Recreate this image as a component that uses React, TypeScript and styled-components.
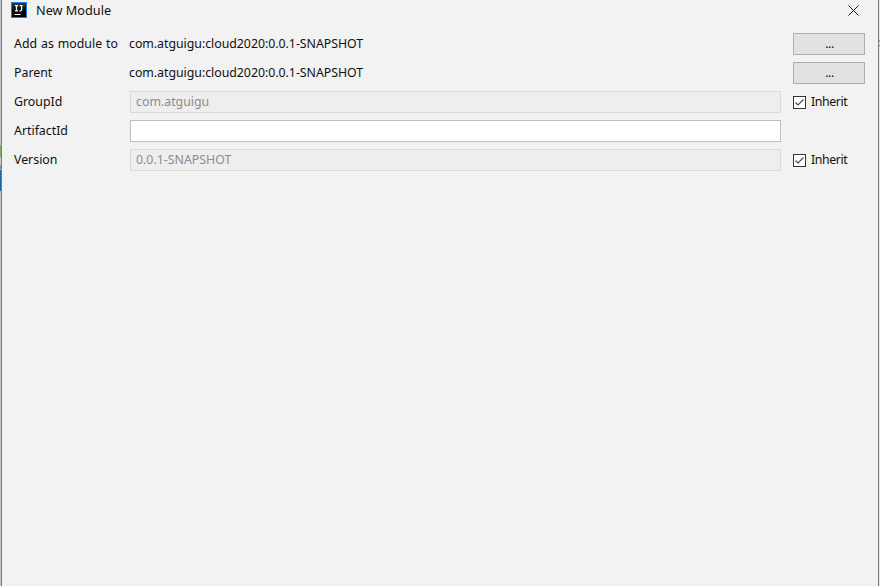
import React from "react";
import styled, { createGlobalStyle } from "styled-components";

const Global = createGlobalStyle`
  html, body { margin: 0; padding: 0; width: 880px; height: 586px; overflow: hidden; background: #f2f2f2; }
  body { font-family: "Noto Sans", "Liberation Sans", sans-serif; font-size: 12.35px; color: #111111; }
`;

const Screen = styled.div`
  width: 880px;
  height: 586px;
  display: flex;
  background: #f2f2f2;
`;

const EdgeStrip = styled.div`
  width: 1px;
  flex: none;
  display: flex;
  flex-direction: column;
  background: #c8c8c8;
`;

const EdgeSegment = styled.div<{ $h: number; $c: string }>`
  height: ${(p) => p.$h}px;
  flex: none;
  background: ${(p) => p.$c};
`;

const Frame = styled.div`
  flex: 1;
  min-width: 0;
  border-left: 1px solid #7a7a7a;
  border-right: 1px solid #7a7a7a;
  padding: 0 13px 0 12px;
  display: flex;
  flex-direction: column;
`;

const TitleBar = styled.div`
  height: 20px;
  display: flex;
  align-items: center;
  gap: 9px;
  margin-left: -3px;
  margin-right: -13px;
  padding-right: 19px;
`;

const Title = styled.span`
  flex: 1;
  font-size: 12.7px;
`;

const Form = styled.div`
  margin-top: 13px;
  display: grid;
  grid-template-columns: 116px 651px 72px;
  grid-auto-rows: 22px;
  row-gap: 7px;
  align-items: center;
`;

const Label = styled.div`
  white-space: nowrap;
  margin-top: -1px;
  word-spacing: 0.7px;
`;

const Value = styled.div`
  white-space: nowrap;
  margin-left: -1px;
  margin-top: -1px;
  letter-spacing: -0.03px;
`;

const Field = styled.div<{ $disabled?: boolean }>`
  height: 22px;
  box-sizing: border-box;
  border: 1px solid ${(p) => (p.$disabled ? "#d9d9d9" : "#bdbdbd")};
  background: ${(p) => (p.$disabled ? "#eeeeee" : "#ffffff")};
  color: #8c8c8c;
  padding-left: 5px;
  line-height: 19px;
`;

const SideCell = styled.div`
  margin-left: 12px;
  width: 72px;
  display: flex;
  align-items: center;
`;

const Browse = styled.div`
  width: 72px;
  height: 22px;
  box-sizing: border-box;
  border: 1px solid #adadad;
  background: #e1e1e1;
  text-align: center;
  line-height: 20px;
  padding-left: 1px;
  letter-spacing: -0.4px;
`;

const CheckBox = styled.span`
  width: 13px;
  height: 13px;
  flex: none;
  box-sizing: border-box;
  border: 1px solid #333333;
  background: #ffffff;
  display: flex;
  margin-right: 5px;
`;

const CheckText = styled.span`
  white-space: nowrap;
  margin-top: -1px;
  letter-spacing: -0.4px;
`;

const Logo = () => (
  <svg width="16" height="16" viewBox="0 0 16 16" style={{ flex: "none" }}>
    <defs>
      <linearGradient id="logoFill" x1="0" y1="0" x2="0" y2="1">
        <stop offset="0" stopColor="#3a3a3a" />
        <stop offset="0.65" stopColor="#000000" />
      </linearGradient>
    </defs>
    <rect x="0.5" y="0.5" width="15" height="15" fill="url(#logoFill)" stroke="#1b7cf0" />
    <path d="M4 3.6h3M5.5 3.6v5.3M4 8.9h3M8.6 3.6h3M10.6 3.6v4.2q0 1.1-1.1 1.1h-1" stroke="#fff" strokeWidth="1.2" fill="none" />
    <rect x="3.5" y="12" width="6" height="1" fill="#fff" />
  </svg>
);

const Close = () => (
  <svg width="11" height="11" viewBox="0 0 11 11">
    <path d="M.5.5l10 10M10.5.5l-10 10" stroke="#1a1a1a" strokeWidth="1" fill="none" />
  </svg>
);

const Tick = () => (
  <svg width="11" height="11" viewBox="0 0 11 11">
    <path d="M1.5 5.5l2.5 2.5 5.5-5.5" stroke="#444" strokeWidth="1.1" fill="none" />
  </svg>
);

const Inherit = () => (
  <SideCell>
    <CheckBox><Tick /></CheckBox>
    <CheckText>Inherit</CheckText>
  </SideCell>
);

const parent = "com.atguigu:cloud2020:0.0.1-SNAPSHOT";

export default function App() {
  return (
    <Screen>
      <Global />
      <EdgeStrip>
        <EdgeSegment $h={145} $c="#c8c8c8" />
        <EdgeSegment $h={12} $c="#7fb069" />
        <EdgeSegment $h={8} $c="#c8c8c8" />
        <EdgeSegment $h={4} $c="#8a8f9a" />
        <EdgeSegment $h={1} $c="#c8c8c8" />
        <EdgeSegment $h={21} $c="#1766a8" />
      </EdgeStrip>
      <Frame>
        <TitleBar>
          <Logo />
          <Title>New Module</Title>
          <Close />
        </TitleBar>
        <Form>
          <Label>Add as module to</Label>
          <Value>{parent}</Value>
          <SideCell><Browse>...</Browse></SideCell>
          <Label>Parent</Label>
          <Value>{parent}</Value>
          <SideCell><Browse>...</Browse></SideCell>
          <Label>GroupId</Label>
          <Field $disabled>com.atguigu</Field>
          <Inherit />
          <Label>ArtifactId</Label>
          <Field />
          <span />
          <Label>Version</Label>
          <Field $disabled>0.0.1-SNAPSHOT</Field>
          <Inherit />
        </Form>
      </Frame>
      <EdgeStrip>
        <EdgeSegment $h={40} $c="#e6e6e6" />
        <EdgeSegment $h={2} $c="#d8a520" />
        <EdgeSegment $h={3} $c="#e6e6e6" />
        <EdgeSegment $h={1} $c="#8a8a8a" />
        <EdgeSegment $h={540} $c="#e6e6e6" />
      </EdgeStrip>
    </Screen>
  );
}
